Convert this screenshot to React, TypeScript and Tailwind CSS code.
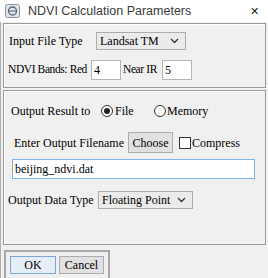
import React from 'react';

const label = "font-['Liberation_Serif',serif] text-[12px] text-black leading-none whitespace-nowrap";
const labelSm = "font-['Liberation_Serif',serif] text-[11.5px] tracking-[-0.4px] text-black leading-none whitespace-nowrap";

const Chevron = () => (
  <svg width="9" height="6" viewBox="0 0 9 6" className="shrink-0">
    <path d="M1 1 L4.5 4.5 L8 1" fill="none" stroke="#333" strokeWidth="1.3" />
  </svg>
);

const Select: React.FC<{ value: string; width: string }> = ({ value, width }) => (
  <div className={`${width} h-[18px] flex items-center justify-between pl-[3px] pr-[6px] bg-[#ebebeb] border border-[#acacac] shrink-0`}>
    <span className={label}>{value}</span>
    <Chevron />
  </div>
);

const Radio: React.FC<{ checked?: boolean }> = ({ checked }) => (
  <div className="w-[12px] h-[12px] rounded-full border border-[#333] bg-white flex items-center justify-center shrink-0">
    {checked && <div className="w-[6px] h-[6px] rounded-full bg-[#222]" />}
  </div>
);

const NumBox: React.FC<{ value: string }> = ({ value }) => (
  <div className="w-[30px] h-[20px] bg-white border border-[#b5b5b5] flex items-start pl-[2px] pt-[3px] shrink-0">
    <span className={label}>{value}</span>
  </div>
);

const App: React.FC = () => {
  return (
    <div className="w-[268px] h-[278px] bg-white flex flex-col overflow-hidden">
      {/* title bar */}
      <div className="h-[22px] flex items-center pl-[5px] pr-[9px] shrink-0">
        <svg width="15" height="14" viewBox="0 0 15 14" className="shrink-0">
          <rect x="0.5" y="0.5" width="14" height="13" rx="2" fill="#dfe3ea" stroke="#8a93a3" />
          <circle cx="7.5" cy="7" r="4" fill="none" stroke="#5b6475" strokeWidth="1.3" />
          <path d="M3.5 7 H11.5" stroke="#5b6475" strokeWidth="1" />
        </svg>
        <span className="ml-[8px] font-['Liberation_Sans',sans-serif] text-[12.5px] text-[#3a3a3a] leading-none">
          NDVI Calculation Parameters
        </span>
        <span className="ml-auto font-['Liberation_Sans',sans-serif] text-[11px] text-[#222] leading-none">✕</span>
      </div>

      <div className="flex-1 bg-[#f0f0f0] border-l border-[#b0b0b0] flex flex-col px-[2px] pt-[1px]">
        {/* panel 1 */}
        <div className="h-[65px] border border-[#9a9a9a] shadow-[inset_1px_1px_0_#fff] flex flex-col pt-[8px] pl-[5px] shrink-0">
          <div className="flex items-center">
            <div className={`${label} w-[87px]`}>Input File Type</div>
            <Select value="Landsat TM" width="w-[90px]" />
          </div>
          <div className="flex items-center mt-[10px] -ml-[1px]">
            <div className={`${labelSm} w-[83px]`}>NDVI Bands: Red</div>
            <NumBox value="4" />
            <div className={`${labelSm} w-[41px] pl-[2px]`}>Near IR</div>
            <NumBox value="5" />
          </div>
        </div>

        {/* panel 2 */}
        <div className="mt-[2px] h-[155px] border border-[#9a9a9a] shadow-[inset_1px_1px_0_#fff] flex flex-col pl-[7px] pt-[14px] shrink-0">
          <div className="flex items-center">
            <div className={`${label} w-[90px]`}>Output Result to</div>
            <Radio checked />
            <div className={`${label} w-[41px] pl-[2px]`}>File</div>
            <Radio />
            <span className={`${label} ml-[1px]`}>Memory</span>
          </div>
          <div className="flex items-center mt-[15px] pl-[3px]">
            <div className={`${label} w-[114px]`}>Enter Output Filename</div>
            <div className="w-[45px] h-[21px] bg-[#e1e1e1] border border-[#adadad] flex items-center justify-center shrink-0">
              <span className={label}>Choose</span>
            </div>
            <div className="ml-[6px] w-[12px] h-[12px] bg-white border border-[#333] shrink-0" />
            <span className={`${label} ml-[1px]`}>Compress</span>
          </div>
          <div className="mt-[6px] ml-[1px] w-[243px] h-[20px] bg-white border border-[#7eb4ea] flex items-center pl-[2px]">
            <span className={label}>beijing_ndvi.dat</span>
          </div>
          <div className="flex items-center mt-[12px] -ml-[3px]">
            <div className={`${label} w-[90px]`}>Output Data Type</div>
            <Select value="Floating Point" width="w-[95px]" />
          </div>
        </div>

        {/* buttons */}
        <div className="mt-[5px] ml-[1px] w-[106px] h-[30px] border-2 border-[#a8a8a8] flex items-center pl-[4px] gap-[3px] shrink-0">
          <div className="w-[46px] h-[18px] bg-[#e5eef7] border border-[#7aa7d4] flex items-center justify-center">
            <span className={label}>OK</span>
          </div>
          <div className="w-[45px] h-[18px] bg-[#e1e1e1] border border-[#adadad] flex items-center justify-center">
            <span className={label}>Cancel</span>
          </div>
        </div>
      </div>
    </div>
  );
};

export default App;
